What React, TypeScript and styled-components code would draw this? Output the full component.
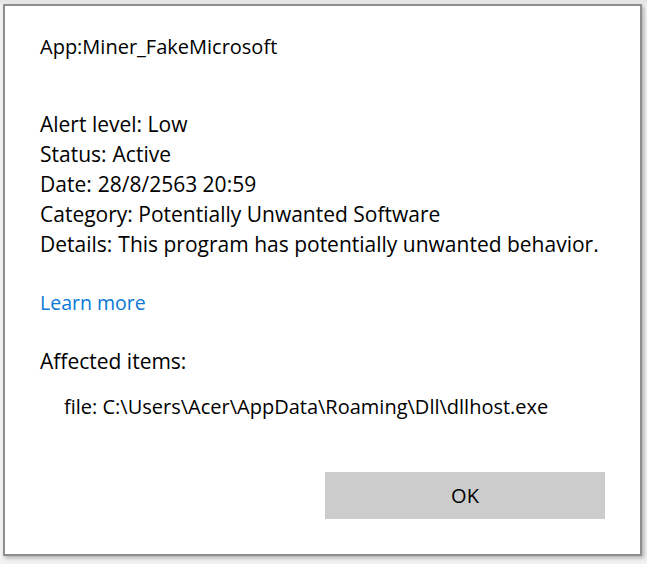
import React from "react";
import styled, { createGlobalStyle } from "styled-components";

const Global = createGlobalStyle`
  html, body {
    margin: 0;
    padding: 0;
    background: #ececec;
  }
  body {
    font-family: "Segoe UI", "Open Sans", "Noto Sans", sans-serif;
  }
`;

const Page = styled.div`
  width: 647px;
  height: 564px;
  padding: 4px 0 0 3px;
  box-sizing: border-box;
  background: linear-gradient(to bottom, #e4e4e4 0px, #f2f2f2 6px, #f2f2f2 100%);
  overflow: hidden;
`;

const Dialog = styled.div`
  width: 639px;
  height: 552px;
  box-sizing: border-box;
  background: #ffffff;
  border: 2px solid #8e8e8e;
  box-shadow: 2px 2px 4px rgba(0, 0, 0, 0.28);
  padding: 26px 35px 35px 35px;
  display: flex;
  flex-direction: column;
  color: #000000;
  font-size: 21px;
  line-height: 30px;
`;

const Title = styled.div`
  font-size: 20px;
`;

const Details = styled.div`
  margin-top: 47px;
  display: flex;
  flex-direction: column;
`;

const Row = styled.div`
  white-space: nowrap;
`;

const Label = styled.span<{ $gap?: number }>`
  margin-right: ${(p) => p.$gap ?? 5}px;
`;

const Link = styled.a`
  margin-top: 29px;
  color: #0a78d7;
  font-size: 19.5px;
  text-decoration: none;
  align-self: flex-start;
`;

const Section = styled.div`
  margin-top: 28px;
`;

const Item = styled.div`
  margin-top: 16px;
  padding-left: 24px;
  font-size: 20px;
  white-space: nowrap;
`;

const Footer = styled.div`
  margin-top: auto;
  display: flex;
  justify-content: flex-end;
`;

const Button = styled.button`
  width: 280px;
  height: 47px;
  border: none;
  background: #cccccc;
  color: #000000;
  font-family: inherit;
  font-size: 20px;
  padding: 0;
`;

export default function App() {
  return (
    <>
      <Global />
      <Page>
        <Dialog>
          <Title>App:Miner_FakeMicrosoft</Title>
          <Details>
            <Row>Alert level: Low</Row>
            <Row>
              <Label $gap={6}>Status:</Label>Active
            </Row>
            <Row>
              <Label $gap={6}>Date:</Label>28/8/2563 20:59
            </Row>
            <Row>Category: Potentially Unwanted Software</Row>
            <Row>
              <Label $gap={6}>Details:</Label>This program has potentially unwanted behavior.
            </Row>
          </Details>
          <Link href="#">Learn more</Link>
          <Section>Affected items:</Section>
          <Item>file: C:\Users\Acer\AppData\Roaming\Dll\dllhost.exe</Item>
          <Footer>
            <Button>OK</Button>
          </Footer>
        </Dialog>
      </Page>
    </>
  );
}
